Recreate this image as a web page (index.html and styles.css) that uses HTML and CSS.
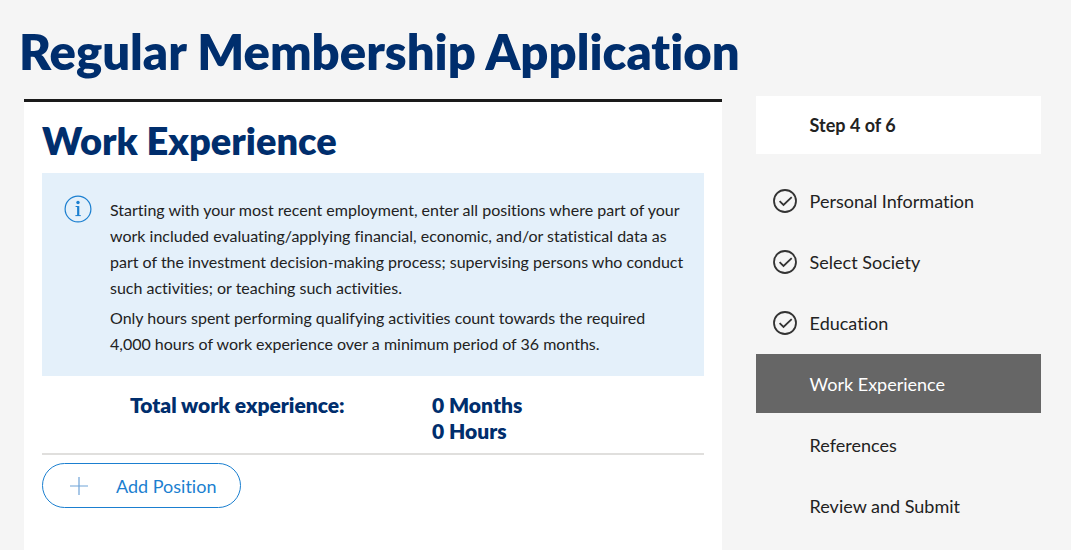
FILE: index.html
```html
<!DOCTYPE html>
<html lang="en">
<head>
    <meta charset="UTF-8">
    <meta name="viewport" content="width=device-width, initial-scale=1.0">
    <title>Regular Membership Application</title>
    <link rel="stylesheet" href="styles.css">
</head>
<body>

<div class="page">
    <h1>Regular Membership Application</h1>

    <div class="columns">
        <main class="card">
            <h2>Work Experience</h2>

            <div class="info">
                <svg class="info-icon" viewBox="0 0 28 28" aria-hidden="true">
                    <circle cx="14" cy="14" r="12.9" fill="none" stroke="currentColor" stroke-width="1.2"/>
                    <circle cx="14" cy="7.5" r="1.7" fill="currentColor"/>
                    <path d="M11.6 11.5h3M11.4 20.6h5.4" fill="none" stroke="currentColor" stroke-width="1"/>
                    <path d="M14.2 11.1v9.8" fill="none" stroke="currentColor" stroke-width="2.2"/>
                </svg>
                <div class="info-text">
                    <p>Starting with your most recent employment, enter all positions where part of your work included evaluating/applying financial, economic, and/or statistical data as part of the investment decision-making process; supervising persons who conduct such activities; or teaching such activities.</p>
                    <p>Only hours spent performing qualifying activities count towards the required 4,000 hours of work experience over a minimum period of 36 months.</p>
                </div>
            </div>

            <div class="total">
                <div class="total-label">Total work experience:</div>
                <div class="total-value">
                    <div>0 Months</div>
                    <div>0 Hours</div>
                </div>
            </div>

            <button type="button" class="add-button">
                <svg class="plus" viewBox="0 0 18 18" aria-hidden="true">
                    <path d="M9 0v18M0 9h18" stroke="currentColor" stroke-width="1.2"/>
                </svg>
                Add Position
            </button>
        </main>

        <aside class="sidebar">
            <div class="step-count">Step 4 of 6</div>
            <nav class="steps">
                <a class="step" href="#">
                    <svg class="check" viewBox="0 0 24 24" aria-hidden="true">
                        <circle cx="12" cy="12" r="11"/>
                        <path d="M6.6 12.2l3.9 3.8 8.2-7.8"/>
                    </svg>
                    Personal Information
                </a>
                <a class="step" href="#">
                    <svg class="check" viewBox="0 0 24 24" aria-hidden="true">
                        <circle cx="12" cy="12" r="11"/>
                        <path d="M6.6 12.2l3.9 3.8 8.2-7.8"/>
                    </svg>
                    Select Society
                </a>
                <a class="step" href="#">
                    <svg class="check" viewBox="0 0 24 24" aria-hidden="true">
                        <circle cx="12" cy="12" r="11"/>
                        <path d="M6.6 12.2l3.9 3.8 8.2-7.8"/>
                    </svg>
                    Education
                </a>
                <a class="step active" href="#" aria-current="step"><span class="check"></span>Work Experience</a>
                <a class="step" href="#"><span class="check"></span>References</a>
                <a class="step" href="#"><span class="check"></span>Review and Submit</a>
            </nav>
        </aside>
    </div>
</div>

</body>
</html>
```
FILE: styles.css
```css
* {
    box-sizing: border-box;
}

body {
    font-family: Lato, "Liberation Sans", sans-serif;
    font-variant-ligatures: none;
    background-color: #f5f5f5;
    color: #222;
    margin: 0;
}

h1, h2, p {
    margin: 0;
}

.page {
    min-height: 100vh;
    padding: 21px 30px 0 24px;
    display: flex;
    flex-direction: column;
}

h1 {
    margin-left: -5px;
    font-size: 49px;
    line-height: 60px;
    font-weight: 800;
    color: #002e6d;
}

.columns {
    flex: 1;
    display: grid;
    grid-template-columns: 22fr 9fr;
    column-gap: 34px;
    padding-top: 15px;
}

.card {
    margin-top: 3px;
    padding: 14px 18px;
    background-color: #fff;
    border-top: 3px solid #1a1a1a;
}

h2 {
    font-size: 38px;
    line-height: 48px;
    font-weight: 800;
    color: #002e6d;
}

.info {
    display: flex;
    gap: 18px;
    margin-top: 9px;
    padding: 22px 20px 19px 22px;
    background-color: #e4f0fa;
}

.info-icon {
    flex: none;
    width: 28px;
    height: 28px;
    color: #1b7fd0;
}

.info-text {
    padding-top: 2px;
    font-size: 16px;
    line-height: 26px;
}

.info-text p + p {
    margin-top: 4px;
}

.total {
    display: flex;
    padding: 16px 0 9px 88px;
    border-bottom: 2px solid #e0dfdd;
    font-size: 21px;
    line-height: 26px;
    font-weight: 800;
    color: #002e6d;
}

.total-label {
    flex: 0 0 302px;
}

.add-button {
    display: flex;
    align-items: center;
    gap: 28px;
    height: 45px;
    margin-top: 8px;
    padding: 0 24px 0 27px;
    background-color: #fff;
    border: 1px solid #1b7fd0;
    border-radius: 23px;
    font-family: inherit;
    font-size: 18px;
    font-variant-ligatures: inherit;
    color: #1b7fd0;
    cursor: pointer;
}

.plus {
    width: 18px;
    height: 18px;
    color: #6fa3d8;
}

.step-count {
    height: 58px;
    padding-left: 54px;
    background-color: #fff;
    font-size: 18px;
    line-height: 58px;
    font-weight: 700;
}

.steps {
    display: flex;
    flex-direction: column;
    gap: 2px;
    margin-top: 17px;
}

.step {
    display: flex;
    align-items: center;
    gap: 13px;
    height: 59px;
    padding-left: 17px;
    font-size: 18px;
    color: #222;
    text-decoration: none;
}

.active {
    background-color: #666;
    color: #fff;
}

.check {
    flex: none;
    width: 24px;
    height: 24px;
    fill: none;
    stroke: #333;
    stroke-width: 1.8;
}
```
